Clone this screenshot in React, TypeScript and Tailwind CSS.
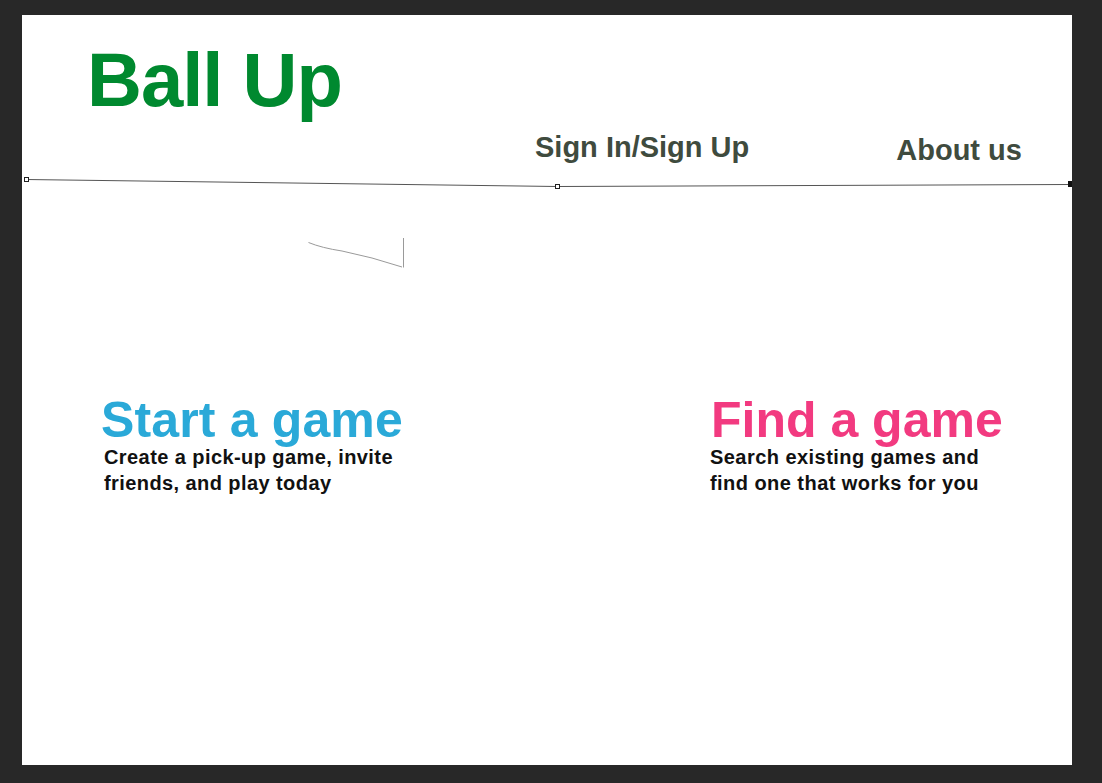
import React from "react";

export default function App() {
  return (
    <div className="w-[1102px] h-[783px] bg-[#282828] pt-[15px] pl-[22px] overflow-hidden" style={{ fontFamily: '"Liberation Sans", Arial, Helvetica, sans-serif' }}>
      <div className="relative w-[1050px] h-[750px] bg-white">
        {/* Logo */}
        <div className="pl-[65px] pt-[27px]">
          <h1 className="text-[76px] leading-none font-bold text-[#00892f] tracking-[-1px]">Ball Up</h1>
        </div>

        {/* Nav */}
        <nav className="flex items-start mt-[15px] text-[29px] leading-none font-bold text-[#3f4b3e]">
          <a className="ml-[513px]">Sign In/Sign Up</a>
          <a className="ml-[147px] mt-[3px]">About us</a>
        </nav>

        {/* Drawn path over canvas */}
        <svg className="absolute left-0 top-[145px] pointer-events-none" width="1050" height="40" viewBox="0 0 1050 40">
          <polyline points="4,19.5 535,26.5 1048,24.5" fill="none" stroke="#555" strokeWidth="1" />
          <rect x="2.5" y="17.5" width="4" height="4" fill="white" stroke="#222" strokeWidth="1" />
          <rect x="533.5" y="24.5" width="4" height="4" fill="white" stroke="#222" strokeWidth="1" />
          <rect x="1046" y="21" width="6" height="6" fill="#111" />
        </svg>
        <svg className="absolute left-[280px] top-[218px] pointer-events-none" width="110" height="40" viewBox="0 0 110 40">
          <path d="M6.5,9.5 Q20,15 40,18 Q70,24 100,34" fill="none" stroke="#9a9a9a" strokeWidth="1" />
          <line x1="101.5" y1="5" x2="101.5" y2="34.5" stroke="#9a9a9a" strokeWidth="1" />
        </svg>

        {/* Actions */}
        <div className="flex mt-[230px] pl-[79px]">
          <div className="w-[610px]">
            <h2 className="text-[50px] leading-none font-bold text-[#2aa9d8] tracking-[0.15px]">Start a game</h2>
            <p className="mt-[-1px] ml-[3px] text-[20px] leading-[26px] font-bold text-[#111] tracking-[0.42px]">
              Create a pick-up game, invite<br />friends, and play today
            </p>
          </div>
          <div>
            <h2 className="text-[50px] leading-none font-bold text-[#f23a80]">Find a game</h2>
            <p className="mt-[-1px] ml-[-1px] text-[20px] leading-[26px] font-bold text-[#111] tracking-[0.45px]">
              Search existing games and<br />find one that works for you
            </p>
          </div>
        </div>
      </div>
    </div>
  );
}
